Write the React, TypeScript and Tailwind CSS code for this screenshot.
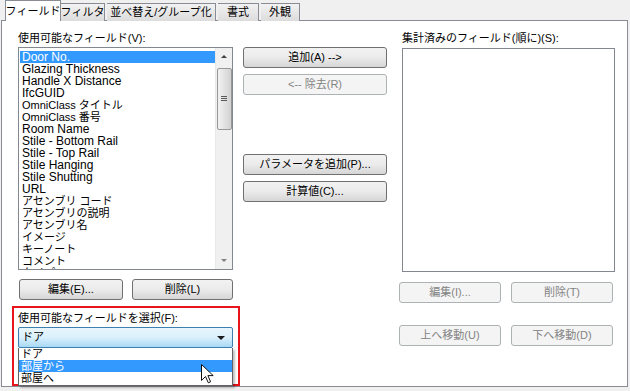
const fields = [
    'Door No.',
    'Glazing Thickness',
    'Handle X Distance',
    'IfcGUID',
    'OmniClass タイトル',
    'OmniClass 番号',
    'Room Name',
    'Stile - Bottom Rail',
    'Stile - Top Rail',
    'Stile Hanging',
    'Stile Shutting',
    'URL',
    'アセンブリ コード',
    'アセンブリの説明',
    'アセンブリ名',
    'イメージ',
    'キーノート',
    'コメント',
    'タイプ',
];

const tabs = [
    { label: 'フィルタ', w: 'w-[44px]' },
    { label: '並べ替え/グループ化', w: 'w-[109px]' },
    { label: '書式', w: 'w-[41px]' },
    { label: '外観', w: 'w-[39px]' },
];

function Btn({ label, disabled, className }: { label: string; disabled?: boolean; className?: string }) {
    return (
        <div
            className={`h-[21px] flex items-center justify-center rounded-[3px] border text-[11px] whitespace-nowrap ${
                disabled
                    ? 'border-[#adb2b5] bg-[#f4f4f4] text-[#838383]'
                    : 'border-[#707070] bg-gradient-to-b from-[#f2f2f2] via-[#ebebeb] to-[#d6d6d6] text-black'
            } ${className ?? ''}`}
        >
            {label}
        </div>
    );
}

export default function App() {
    return (
        <div className="w-[630px] h-[391px] bg-[#f0f0f0] overflow-hidden text-black font-['Liberation_Sans','Noto_Sans_CJK_JP',sans-serif]">
            {/* tab strip */}
            <div className="flex items-end h-[21px] pl-[5px] relative z-10">
                <div className="h-[21px] w-[56px] bg-white border border-[#898c95] border-b-0 flex items-center justify-center text-[11px] whitespace-nowrap">
                    フィールド
                </div>
                {tabs.map((t) => (
                    <div
                        key={t.label}
                        className={`h-[18px] ${t.w} mr-[2px] bg-gradient-to-b from-[#f2f2f2] to-[#dcdcdc] border border-[#898c95] border-b-0 border-l-0 flex items-center justify-center text-[11px] whitespace-nowrap`}
                    >
                        {t.label}
                    </div>
                ))}
            </div>

            {/* panel */}
            <div className="-mt-[1px] ml-[1px] w-[627px] h-[367px] bg-white border border-[#898c95] flex pl-[16px] pt-[10px]">
                {/* left column */}
                <div className="w-[215px] flex flex-col">
                    <div className="text-[11px] leading-[14px] h-[16px] whitespace-nowrap">使用可能なフィールド(V):</div>
                    <div className="h-[225px] border border-[#828790] flex overflow-hidden">
                        <div className="flex-1 pt-[3px] pl-[1px] overflow-hidden">
                            {fields.map((f, i) => (
                                <div
                                    key={f}
                                    className={`h-[12px] leading-[12px] pl-[2px] whitespace-nowrap ${
                                        /[^\x00-\x7f]/.test(f) ? 'text-[11px]' : 'text-[12px]'
                                    } ${i === 0 ? 'bg-[#3399ff] text-white' : ''}`}
                                >
                                    {f}
                                </div>
                            ))}
                        </div>
                        <div className="w-[17px] bg-[#f0f0f0] border-l border-[#e8e8e8] flex flex-col items-center">
                            <div className="h-[17px] flex items-center justify-center">
                                <div className="w-0 h-0 border-l-[3px] border-r-[3px] border-b-[3px] border-l-transparent border-r-transparent border-b-[#404040]" />
                            </div>
                            <div className="w-[15px] h-[62px] mt-[3px] rounded-[2px] border border-[#979797] bg-gradient-to-r from-[#f2f2f2] to-[#d2d2d2] flex flex-col items-center justify-center gap-[1px]">
                                <div className="w-[6px] h-[1px] bg-[#5a5a5a]" />
                                <div className="w-[6px] h-[1px] bg-[#5a5a5a]" />
                                <div className="w-[6px] h-[1px] bg-[#5a5a5a]" />
                            </div>
                            <div className="flex-1" />
                            <div className="h-[17px] flex items-center justify-center">
                                <div className="w-0 h-0 border-l-[3px] border-r-[3px] border-t-[3px] border-l-transparent border-r-transparent border-t-[#808080]" />
                            </div>
                        </div>
                    </div>
                    <div className="flex gap-[9px] mt-[9px] pl-[1px]">
                        <Btn label="編集(E)..." className="w-[104px]" />
                        <Btn label="削除(L)" className="w-[101px]" />
                    </div>

                    {/* highlighted section */}
                    <div className="relative mt-[6px] -ml-[6px] w-[228px] h-[80px] border-2 border-[#e8141b] pl-[4px] pt-[3px]">
                        <div className="text-[11px] leading-[14px] h-[16px] whitespace-nowrap">使用可能なフィールドを選択(F):</div>
                        <div className="w-[215px] h-[21px] rounded-[2px] border border-[#3c7fb1] bg-gradient-to-b from-[#eaf6fd] via-[#d9f0fc] to-[#a7d9f5] flex items-center justify-between px-[3px] text-[11px]">
                            <span>ドア</span>
                            <div className="w-0 h-0 mr-[4px] border-l-[4px] border-r-[4px] border-t-[4px] border-l-transparent border-r-transparent border-t-[#1a1a1a]" />
                        </div>
                        <div className="w-[215px] h-[38px] border border-[#646464] border-t-0 bg-white shadow-[2px_2px_2px_rgba(0,0,0,0.25)] text-[11px]">
                            <div className="h-[12px] leading-[12px] pl-[2px]">ドア</div>
                            <div className="h-[12px] leading-[12px] pl-[2px] bg-[#3399ff] text-white">部屋から</div>
                            <div className="h-[12px] leading-[12px] pl-[2px]">部屋へ</div>
                        </div>
                        {/* mouse cursor */}
                        <svg
                            className="absolute left-[187px] top-[56px]"
                            width="13"
                            height="20"
                            viewBox="0 0 13 20"
                        >
                            <path
                                d="M0.5 0.5 L0.5 16.5 L4.5 12.5 L7.3 18.8 L9.6 17.8 L6.9 11.6 L12.2 11.6 Z"
                                fill="white"
                                stroke="#111"
                                strokeWidth="1"
                                strokeLinejoin="miter"
                            />
                        </svg>
                    </div>
                </div>

                {/* middle column */}
                <div className="w-[144px] ml-[10px] flex flex-col pt-[16px]">
                    <Btn label="追加(A) -->" />
                    <Btn label="<-- 除去(R)" disabled className="mt-[6px]" />
                    <Btn label="パラメータを追加(P)..." className="mt-[59px]" />
                    <Btn label="計算値(C)..." className="mt-[6px]" />
                </div>

                {/* right column */}
                <div className="w-[216px] ml-[12px] flex flex-col">
                    <div className="text-[11px] leading-[14px] h-[17px] pl-[3px] whitespace-nowrap">集計済みのフィールド(順に)(S):</div>
                    <div className="ml-[3px] w-[213px] h-[224px] border border-[#828790]" />
                    <div className="flex gap-[10px] mt-[10px]">
                        <Btn label="編集(I)..." disabled className="w-[102px]" />
                        <Btn label="削除(T)" disabled className="w-[102px]" />
                    </div>
                    <div className="flex gap-[10px] mt-[22px]">
                        <Btn label="上へ移動(U)" disabled className="w-[102px]" />
                        <Btn label="下へ移動(D)" disabled className="w-[102px]" />
                    </div>
                </div>
            </div>
        </div>
    );
}
